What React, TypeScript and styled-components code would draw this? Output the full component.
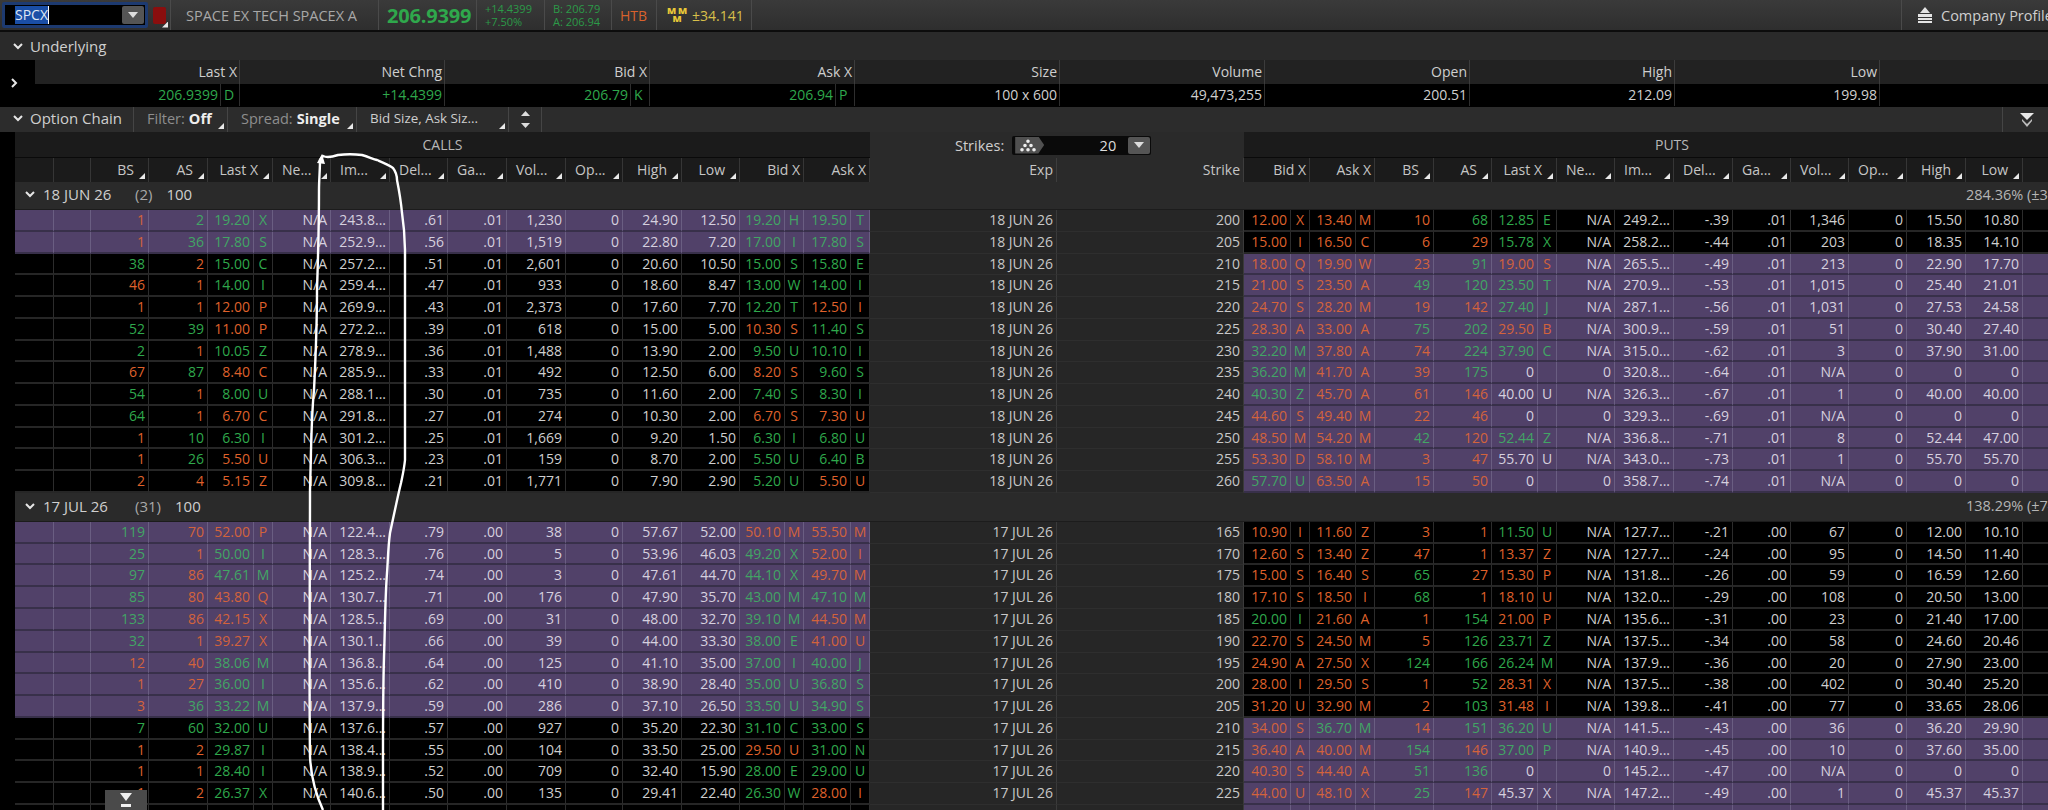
import React from 'react'
import styled, { createGlobalStyle } from 'styled-components'

const GREEN = '#2fa84c'
const ORANGE = '#df612b'
const GREEN_ITM = '#42a565'
const ORANGE_ITM = '#d3633c'
const PURPLE = '#514169'

const GlobalStyle = createGlobalStyle`
  html, body {
    margin: 0;
    width: 2048px;
    height: 810px;
    overflow: hidden;
    background: #000;
  }
  body {
    font-family: "Open Sans", "Liberation Sans", sans-serif;
    font-size: 14px;
    color: #cfcfcf;
  }
`

const Page = styled.div`
  width: 2100px;
  display: flex;
  flex-direction: column;
`

const TopBar = styled.div`
  display: flex;
  height: 30px;
  background: linear-gradient(#3a3a3a, #2e2e2e);
  border-bottom: 2px solid #0c0c0c;
`
const Seg = styled.div<{ $w: number }>`
  flex: 0 0 ${(p) => p.$w}px;
  display: flex;
  align-items: center;
  padding-left: 8px;
  box-sizing: border-box;
  border-right: 1px solid #4a4a4a;
  white-space: nowrap;
`
const Spacer = styled.div`
  flex: 1;
`
const SymbolSeg = styled.div`
  flex: 0 0 171px;
  display: flex;
  align-items: center;
  box-sizing: border-box;
  padding-left: 2px;
  gap: 5px;
  border-right: 1px solid #4a4a4a;
`
const SymbolBox = styled.div`
  width: 146px;
  height: 26px;
  box-sizing: border-box;
  background: #000;
  border: 3px solid #1d3a70;
  border-radius: 2px;
  display: flex;
  align-items: center;
  padding-left: 10px;
`
const Selected = styled.span`
  background: #1a4ea6;
  color: #dfe8f5;
  line-height: 18px;
  border-right: 1px solid #fff;
`
const DropBtn = styled.span`
  margin-left: auto;
  margin-right: 1px;
  width: 22px;
  height: 18px;
  background: #555;
  border-radius: 2px;
  display: flex;
  align-items: center;
  justify-content: center;
  &::after {
    content: '';
    border-left: 5px solid transparent;
    border-right: 5px solid transparent;
    border-top: 6px solid #ddd;
  }
`
const RedBox = styled.div`
  position: relative;
  width: 13px;
  height: 17px;
  background: #8a0e0e;
  border-radius: 2px;
`
const Corner = styled.span`
  position: absolute;
  right: 3px;
  bottom: 3px;
  width: 6px;
  height: 6px;
  background: #e8e8e8;
  clip-path: polygon(100% 0, 100% 100%, 0 100%);
`
const RedCorner = styled(Corner)`
  right: -2px;
  bottom: -4px;
`
const Name = styled.span`
  font-size: 14.5px;
  color: #a8a8a8;
  margin-left: 7px;
`
const Price = styled.span`
  font-size: 20px;
  font-weight: 700;
  color: ${GREEN};
  letter-spacing: -0.2px;
`
const Stack = styled.div<{ $color: string }>`
  display: flex;
  flex-direction: column;
  font-size: 11px;
  line-height: 13px;
  color: ${(p) => p.$color};
`
const Htb = styled.span`
  color: #d9622c;
`
const MmIcon = styled.span`
  display: inline-grid;
  grid-template-columns: 11px 11px;
  justify-items: center;
  margin: 0 4px 0 1px;
  font-size: 9.5px;
  font-weight: 800;
  line-height: 8px;
  color: #e8c838;
`
const MmBottom = styled.span`
  grid-column: span 2;
`
const Mm = styled.span`
  color: #d8c04a;
`
const ProfileSeg = styled.div`
  flex: 0 0 199px;
  display: flex;
  align-items: center;
  padding-left: 15px;
  gap: 8px;
  box-sizing: border-box;
  border-left: 1px solid #4a4a4a;
  font-size: 14.5px;
  color: #cfcfcf;
`

const Section = styled.div`
  height: 28px;
  display: flex;
  align-items: center;
  background: #2a2a2a;
  padding-left: 13px;
  gap: 7px;
  font-size: 15px;
`

const QuoteWrap = styled.div`
  display: flex;
  height: 46px;
  background: #000;
`
const QuoteGutter = styled.div`
  flex: 0 0 35px;
  display: flex;
  align-items: center;
  padding-left: 9px;
  box-sizing: border-box;
`
const QuoteGrid = styled.div`
  display: grid;
  grid-template-columns: repeat(9, 205px) 1fr;
  grid-template-rows: 24px 22px;
  flex: 1;
`
const QuoteHead = styled.div`
  background: #222;
  border-right: 1px solid #3c3c3c;
  text-align: right;
  padding-right: 2px;
  line-height: 24px;
`
const QuoteValue = styled.div<{ $green?: boolean }>`
  border-right: 1px solid #2e2e2e;
  display: flex;
  justify-content: flex-end;
  line-height: 22px;
  padding-right: 2px;
  color: ${(p) => (p.$green ? GREEN : '#cfcfcf')};
`
const QuoteExch = styled.span`
  flex: 0 0 19px;
  box-sizing: border-box;
  margin-left: 2px;
  margin-right: -2px;
  padding-left: 3px;
  border-left: 1px solid #2e2e2e;
`

const ChainBar = styled.div`
  height: 25px;
  display: flex;
  background: #2c2c2c;
  margin-top: 1px;
  font-size: 14.5px;
`
const BarSeg = styled.div<{ $w: number }>`
  position: relative;
  flex: 0 0 ${(p) => p.$w}px;
  display: flex;
  align-items: center;
  box-sizing: border-box;
  padding: 0 0 3px 13px;
  gap: 4px;
  border-right: 1px solid #454545;
  white-space: nowrap;
`
const TitleSeg = styled(BarSeg)`
  gap: 7px;
  font-size: 15px;
`
const Dim = styled.span`
  color: #8e8e8e;
`
const Strong = styled.b`
  color: #eee;
  font-weight: 700;
`
const Columns = styled.span`
  font-size: 13.4px;
`
const SpinSeg = styled.div`
  flex: 0 0 32px;
  display: flex;
  flex-direction: column;
  align-items: center;
  justify-content: space-around;
  border-right: 1px solid #454545;
`
const CollapseSeg = styled.div`
  margin-left: auto;
  flex: 0 0 98px;
  border-left: 1px solid #454545;
  display: flex;
  align-items: center;
  padding-left: 17px;
  box-sizing: border-box;
`

const Chain = styled.div`
  padding-left: 15px;
  background: #000;
`
const COLS =
  '39px 37px 58px 59px 46px 19px 58px 59px 58px 59px 59px 57px 59px 58px 45px 19px 47px 19px ' +
  '187px 187px ' +
  '47px 19px 46px 19px 59px 58px 46px 19px 58px 59px 59px 58px 58px 58px 59px 57px 77px'

const TitleRow = styled.div`
  display: grid;
  grid-template-columns: 855px 374px 856px;
  height: 26px;
`
const SideTitle = styled.div`
  background: #1b1b1b;
  text-align: center;
  line-height: 25px;
  color: #b8b8b8;
  border-bottom: 1px solid #0a0a0a;
`
const MidTitle = styled.div`
  background: #2a2a2a;
  display: flex;
  align-items: center;
  padding-left: 85px;
  gap: 8px;
  font-size: 14.5px;
`
const StrikeBox = styled.div`
  width: 139px;
  height: 19px;
  background: #0a0a0a;
  border-radius: 2px;
  display: flex;
  align-items: center;
`
const StrikeIcon = styled.span`
  width: 29px;
  height: 17px;
  margin-left: 3px;
  background: #505050;
  clip-path: polygon(0 0, 80% 0, 100% 50%, 80% 100%, 0 100%);
  display: flex;
  align-items: center;
  padding-left: 5px;
  box-sizing: border-box;
`
const StrikeValue = styled.span`
  margin-left: auto;
  margin-right: 12px;
  color: #ddd;
`
const StrikeDrop = styled(DropBtn)`
  margin-left: 0;
  width: 22px;
  height: 17px;
`

const HeadRow = styled.div`
  display: grid;
  grid-template-columns: ${COLS};
  height: 23px;
`
const Head = styled.div<{ $span?: number; $trunc?: boolean; $sort?: boolean; $mid?: boolean }>`
  position: relative;
  grid-column: span ${(p) => p.$span || 1};
  box-sizing: border-box;
  background: ${(p) => (p.$mid ? '#2a2a2a' : '#1b1b1b')};
  border-right: 1px solid ${(p) => (p.$mid ? '#3d3d3d' : '#363636')};
  line-height: 24px;
  font-size: 14px;
  color: #c6c6c6;
  white-space: nowrap;
  text-align: ${(p) => (p.$trunc ? 'left' : 'right')};
  padding: ${(p) => (p.$trunc ? '0 0 0 9px' : p.$sort ? '0 14px 0 0' : '0 3px 0 0')};
`

const GroupRow = styled.div`
  height: 29px;
  display: flex;
  align-items: center;
  background: #2a2a2a;
  padding: 0 0 2px 10px;
  box-sizing: border-box;
  border-bottom: 1px solid #1c1c1c;
  font-size: 15px;
`
const GroupDate = styled.span`
  flex: 0 0 92px;
  margin-left: 8px;
`
const GroupCount = styled.span`
  margin-right: 14px;
  color: #a8a8a8;
`
const GroupIv = styled.span`
  position: absolute;
  left: 1966px;
  white-space: nowrap;
  color: #b5b5b5;
  font-size: 14.5px;
`

const Row = styled.div`
  display: grid;
  grid-template-columns: ${COLS};
  height: 21.78px;
`
const toneColor = (tone: string | undefined, itm?: boolean) => {
  if (tone === 'g') return itm ? GREEN_ITM : GREEN
  if (tone === 'o') return itm ? ORANGE_ITM : ORANGE
  return itm ? '#d6d0df' : '#cfcfcf'
}
const Cell = styled.div<{ $itm?: boolean; $tone?: string; $center?: boolean }>`
  box-sizing: border-box;
  background: ${(p) => (p.$itm ? PURPLE : '#000')};
  border-right: 1px solid ${(p) => (p.$itm ? '#6a5e82' : '#2c2c2c')};
  border-bottom: 2px solid ${(p) => (p.$itm ? '#38304a' : '#262626')};
  color: ${(p) => toneColor(p.$tone, p.$itm)};
  text-align: ${(p) => (p.$center ? 'center' : 'right')};
  padding-right: ${(p) => (p.$center ? 0 : 3)}px;
  line-height: 20px;
  white-space: nowrap;
  overflow: hidden;
`
const MidCell = styled.div`
  box-sizing: border-box;
  background: #262626;
  border-right: 1px solid #3a3a3a;
  border-bottom: 1px solid #2e2e2e;
  text-align: right;
  padding-right: 3px;
  line-height: 20px;
  color: #c8c8c8;
`

const ScrollBtn = styled.div`
  position: absolute;
  left: 105px;
  top: 790px;
  width: 42px;
  height: 20px;
  background: #4a4a4a;
  display: flex;
  align-items: center;
  justify-content: center;
`
const Scribble = styled.svg`
  position: absolute;
  left: 0;
  top: 0;
  pointer-events: none;
`

const Chevron = ({ right }: { right?: boolean }) => (
  <svg width="10" height="10" viewBox="0 0 10 10" style={right ? { transform: 'rotate(-90deg)' } : undefined}>
    <path d="M1 3l4 4 4-4" fill="none" stroke="#e6e6e6" strokeWidth="2" />
  </svg>
)
const Tri = ({ down }: { down?: boolean }) => (
  <svg width="9" height="5" viewBox="0 0 9 5">
    <path d={down ? 'M0 0h9L4.5 5z' : 'M0 5h9L4.5 0z'} fill="#dcdcdc" />
  </svg>
)

type Side = { itm: boolean; text: string }
type ChainRow = { calls: Side; puts: Side; exp: string; strike: string }

const SideCells = ({ side, keyPrefix }: { side: Side; keyPrefix: string }) => {
  const tokens = side.text.split(' ')
  let last = ''
  return (
    <>
      {tokens.map((raw, i) => {
        let tone = ''
        let value = raw
        if (raw[0] === '^') tone = 'g'
        if (raw[0] === '~') tone = 'o'
        if (tone) value = raw.slice(1)
        const isExch = /^[A-Z_]$/.test(value)
        if (isExch) tone = last
        last = tone
        return (
          <Cell key={keyPrefix + i} $itm={side.itm} $tone={tone} $center={isExch}>
            {value === '_' ? '' : value}
          </Cell>
        )
      })}
    </>
  )
}

const EMPTY_CALLS = '_ _ _ _ _ _ _ _ _ _ _ _ _ _ _ _ _ _'

const parse = (lines: string[], exp: string): ChainRow[] =>
  lines.map((line) => {
    const [c, strike, p] = line.split('|')
    const callsItm = c[0] === '*'
    const putsItm = p[0] === '*'
    return {
      calls: { itm: callsItm, text: callsItm ? c.slice(1) : c },
      puts: { itm: putsItm, text: (putsItm ? p.slice(1) : p) + ' _' },
      exp,
      strike,
    }
  })

const JUN = parse(
  [
    '*_ _ ~1 ^2 ^19.20 X N/A 243.8... .61 .01 1,230 0 24.90 12.50 ^19.20 H ^19.50 T|200|~12.00 X ~13.40 M ~10 ^68 ^12.85 E N/A 249.2... -.39 .01 1,346 0 15.50 10.80',
    '*_ _ ~1 ^36 ^17.80 S N/A 252.9... .56 .01 1,519 0 22.80 7.20 ^17.00 I ^17.80 S|205|~15.00 I ~16.50 C ~6 ~29 ^15.78 X N/A 258.2... -.44 .01 203 0 18.35 14.10',
    '_ _ ^38 ~2 ^15.00 C N/A 257.2... .51 .01 2,601 0 20.60 10.50 ^15.00 S ^15.80 E|210|*~18.00 Q ~19.90 W ~23 ^91 ~19.00 S N/A 265.5... -.49 .01 213 0 22.90 17.70',
    '_ _ ~46 ~1 ^14.00 I N/A 259.4... .47 .01 933 0 18.60 8.47 ^13.00 W ^14.00 I|215|*~21.00 S ~23.50 A ^49 ^120 ^23.50 T N/A 270.9... -.53 .01 1,015 0 25.40 21.01',
    '_ _ ~1 ~1 ~12.00 P N/A 269.9... .43 .01 2,373 0 17.60 7.70 ^12.20 T ~12.50 I|220|*~24.70 S ~28.20 M ~19 ~142 ^27.40 J N/A 287.1... -.56 .01 1,031 0 27.53 24.58',
    '_ _ ^52 ^39 ~11.00 P N/A 272.2... .39 .01 618 0 15.00 5.00 ~10.30 S ^11.40 S|225|*~28.30 A ~33.00 A ^75 ^202 ~29.50 B N/A 300.9... -.59 .01 51 0 30.40 27.40',
    '_ _ ^2 ~1 ^10.05 Z N/A 278.9... .36 .01 1,488 0 13.90 2.00 ^9.50 U ^10.10 I|230|*^32.20 M ~37.80 A ~74 ^224 ^37.90 C N/A 315.0... -.62 .01 3 0 37.90 31.00',
    '_ _ ~67 ^87 ~8.40 C N/A 285.9... .33 .01 492 0 12.50 6.00 ~8.20 S ^9.60 S|235|*^36.20 M ~41.70 A ~39 ^175 0 _ 0 320.8... -.64 .01 N/A 0 0 0',
    '_ _ ^54 ~1 ^8.00 U N/A 288.1... .30 .01 735 0 11.60 2.00 ^7.40 S ^8.30 I|240|*^40.30 Z ~45.70 A ~61 ~146 40.00 U N/A 326.3... -.67 .01 1 0 40.00 40.00',
    '_ _ ^64 ~1 ~6.70 C N/A 291.8... .27 .01 274 0 10.30 2.00 ~6.70 S ~7.30 U|245|*~44.60 S ~49.40 M ~22 ~46 0 _ 0 329.3... -.69 .01 N/A 0 0 0',
    '_ _ ~1 ^10 ^6.30 I N/A 301.2... .25 .01 1,669 0 9.20 1.50 ^6.30 I ^6.80 U|250|*~48.50 M ~54.20 M ^42 ~120 ^52.44 Z N/A 336.8... -.71 .01 8 0 52.44 47.00',
    '_ _ ~1 ^26 ~5.50 U N/A 306.3... .23 .01 159 0 8.70 2.00 ^5.50 U ^6.40 B|255|*~53.30 D ~58.10 M ~3 ~47 55.70 U N/A 343.0... -.73 .01 1 0 55.70 55.70',
    '_ _ ~2 ~4 ~5.15 Z N/A 309.8... .21 .01 1,771 0 7.90 2.90 ^5.20 U ~5.50 U|260|*^57.70 U ~63.50 A ~15 ~50 0 _ 0 358.7... -.74 .01 N/A 0 0 0',
  ],
  '18 JUN 26',
)

const JUL = parse(
  [
    '*_ _ ^119 ~70 ~52.00 P N/A 122.4... .79 .00 38 0 57.67 52.00 ~50.10 M ~55.50 M|165|~10.90 I ~11.60 Z ~3 ~1 ^11.50 U N/A 127.7... -.21 .00 67 0 12.00 10.10',
    '*_ _ ^25 ~1 ^50.00 I N/A 128.3... .76 .00 5 0 53.96 46.03 ^49.20 X ~52.00 I|170|~12.60 S ~13.40 Z ~47 ~1 ~13.37 Z N/A 127.7... -.24 .00 95 0 14.50 11.40',
    '*_ _ ^97 ~86 ^47.61 M N/A 125.2... .74 .00 3 0 47.61 44.70 ^44.10 X ~49.70 M|175|~15.00 S ~16.40 S ^65 ~27 ~15.30 P N/A 131.8... -.26 .00 59 0 16.59 12.60',
    '*_ _ ^85 ~80 ~43.80 Q N/A 130.7... .71 .00 176 0 47.90 35.70 ^43.00 M ^47.10 M|180|~17.10 S ~18.50 I ^68 ~1 ~18.10 U N/A 132.0... -.29 .00 108 0 20.50 13.00',
    '*_ _ ^133 ~86 ~42.15 X N/A 128.5... .69 .00 31 0 48.00 32.70 ^39.10 M ~44.50 M|185|^20.00 I ~21.60 A ~1 ^154 ~21.00 P N/A 135.6... -.31 .00 23 0 21.40 17.00',
    '*_ _ ^32 ~1 ~39.27 X N/A 130.1... .66 .00 39 0 44.00 33.30 ^38.00 E ~41.00 U|190|~22.70 S ~24.50 M ~5 ^126 ^23.71 Z N/A 137.5... -.34 .00 58 0 24.60 20.46',
    '*_ _ ~12 ~40 ^38.06 M N/A 136.8... .64 .00 125 0 41.10 35.00 ^37.00 I ^40.00 J|195|~24.90 A ~27.50 X ^124 ^166 ^26.24 M N/A 137.9... -.36 .00 20 0 27.90 23.00',
    '*_ _ ~1 ~27 ^36.00 I N/A 135.6... .62 .00 410 0 38.90 28.40 ^35.00 U ^36.80 S|200|~28.00 I ~29.50 S ~1 ^52 ~28.31 X N/A 137.5... -.38 .00 402 0 30.40 25.20',
    '*_ _ ~3 ^36 ^33.22 M N/A 137.9... .59 .00 286 0 37.10 26.50 ^33.50 U ^34.90 S|205|~31.20 U ~32.90 M ~2 ^103 ~31.48 I N/A 139.8... -.41 .00 77 0 33.65 28.06',
    '_ _ ^7 ^60 ^32.00 U N/A 137.6... .57 .00 927 0 35.20 22.30 ^31.10 C ^33.00 S|210|*~34.00 S ^36.70 M ~14 ^151 ^36.20 U N/A 141.5... -.43 .00 36 0 36.20 29.90',
    '_ _ ~1 ~2 ^29.87 I N/A 138.4... .55 .00 104 0 33.50 25.00 ~29.50 U ^31.00 N|215|*~36.40 A ~40.00 M ^154 ~146 ^37.00 P N/A 140.9... -.45 .00 10 0 37.60 35.00',
    '_ _ ~1 ~1 ^28.40 I N/A 138.9... .52 .00 709 0 32.40 15.90 ^28.00 E ^29.00 U|220|*~40.30 S ~44.40 A ^51 ^136 0 _ 0 145.2... -.47 .00 N/A 0 0 0',
    '_ _ ~1 ~2 ^26.37 X N/A 140.6... .50 .00 135 0 29.41 22.40 ^26.30 W ~28.00 I|225|*~44.00 U ~48.10 X ^25 ~147 45.37 X N/A 147.2... -.49 .00 1 0 45.37 45.37',
    `${EMPTY_CALLS}| |*_ _ _ _ _ _ _ _ _ _ _ _ _ _ _ _`,
  ],
  '17 JUL 26',
)

type HeadDef = [string, 'sort' | 'trunc' | 'plain', number]

const CALL_HEADS: HeadDef[] = [
  ['', 'plain', 1],
  ['', 'plain', 1],
  ['BS', 'sort', 1],
  ['AS', 'sort', 1],
  ['Last X', 'sort', 2],
  ['Ne...', 'trunc', 1],
  ['Im...', 'trunc', 1],
  ['Del...', 'trunc', 1],
  ['Ga...', 'trunc', 1],
  ['Vol...', 'trunc', 1],
  ['Op...', 'trunc', 1],
  ['High', 'sort', 1],
  ['Low', 'sort', 1],
  ['Bid X', 'plain', 2],
  ['Ask X', 'plain', 2],
]
const PUT_HEADS: HeadDef[] = [
  ['Bid X', 'plain', 2],
  ['Ask X', 'plain', 2],
  ['BS', 'sort', 1],
  ['AS', 'sort', 1],
  ['Last X', 'sort', 2],
  ['Ne...', 'trunc', 1],
  ['Im...', 'trunc', 1],
  ['Del...', 'trunc', 1],
  ['Ga...', 'trunc', 1],
  ['Vol...', 'trunc', 1],
  ['Op...', 'trunc', 1],
  ['High', 'sort', 1],
  ['Low', 'sort', 1],
  ['', 'plain', 1],
]

const renderHeads = (heads: HeadDef[], prefix: string) =>
  heads.map(([label, kind, span], i) => (
    <Head key={prefix + i} $span={span} $trunc={kind === 'trunc'} $sort={kind === 'sort'}>
      {label}
      {kind === 'sort' || kind === 'trunc' ? <Corner /> : null}
    </Head>
  ))

const QUOTES: [string, string, string, boolean][] = [
  ['Last X', '206.9399', 'D', true],
  ['Net Chng', '+14.4399', '', true],
  ['Bid X', '206.79', 'K', true],
  ['Ask X', '206.94', 'P', true],
  ['Size', '100 x 600', '', false],
  ['Volume', '49,473,255', '', false],
  ['Open', '200.51', '', false],
  ['High', '212.09', '', false],
  ['Low', '199.98', '', false],
  ['', '', '', false],
]

const Group = ({ date, count, iv, rows }: { date: string; count: string; iv: string; rows: ChainRow[] }) => (
  <>
    <GroupRow>
      <Chevron />
      <GroupDate>{date}</GroupDate>
      <GroupCount>({count})</GroupCount>
      <span>100</span>
      <GroupIv>{iv}</GroupIv>
    </GroupRow>
    {rows.map((r, i) => (
      <Row key={i}>
        <SideCells side={r.calls} keyPrefix="c" />
        <MidCell>{r.strike.trim() ? r.exp : ''}</MidCell>
        <MidCell>{r.strike}</MidCell>
        <SideCells side={r.puts} keyPrefix="p" />
      </Row>
    ))}
  </>
)

const App = () => {
  return (
    <>
      <GlobalStyle />
      <Page>
        <TopBar>
          <SymbolSeg>
            <SymbolBox>
              <Selected>SPCX</Selected>
              <DropBtn />
            </SymbolBox>
            <RedBox>
              <RedCorner />
            </RedBox>
          </SymbolSeg>
          <Seg $w={208}>
            <Name>SPACE EX TECH SPACEX A</Name>
          </Seg>
          <Seg $w={98}>
            <Price>206.9399</Price>
          </Seg>
          <Seg $w={68}>
            <Stack $color="#2c9a48">
              <span>+14.4399</span>
              <span>+7.50%</span>
            </Stack>
          </Seg>
          <Seg $w={67}>
            <Stack $color="#2c9a48">
              <span>B: 206.79</span>
              <span>A: 206.94</span>
            </Stack>
          </Seg>
          <Seg $w={45}>
            <Htb>HTB</Htb>
          </Seg>
          <Seg $w={95}>
            <MmIcon>
              <span>M</span>
              <span>M</span>
              <MmBottom>M</MmBottom>
            </MmIcon>
            <Mm>±34.141</Mm>
          </Seg>
          <Spacer />
          <ProfileSeg>
            <svg width="16" height="16" viewBox="0 0 16 16">
              <path d="M8 0l5 6H3z" fill="#e4e4e4" />
              <path d="M1 7h14v3H1zM1 11h14v2H1zM1 14h14v2H1z" fill="#e4e4e4" />
            </svg>
            Company Profile
          </ProfileSeg>
        </TopBar>

        <Section>
          <Chevron />
          Underlying
        </Section>

        <QuoteWrap>
          <QuoteGutter>
            <Chevron right />
          </QuoteGutter>
          <QuoteGrid>
            {QUOTES.map((q, i) => (
              <QuoteHead key={i}>{q[0]}</QuoteHead>
            ))}
            {QUOTES.map((q, i) => (
              <QuoteValue key={i} $green={q[3]}>
                {q[1]}
                {q[2] ? <QuoteExch>{q[2]}</QuoteExch> : null}
              </QuoteValue>
            ))}
          </QuoteGrid>
        </QuoteWrap>

        <ChainBar>
          <TitleSeg $w={134}>
            <Chevron />
            Option Chain
          </TitleSeg>
          <BarSeg $w={94}>
            <Dim>Filter:</Dim>
            <Strong>Off</Strong>
            <Corner />
          </BarSeg>
          <BarSeg $w={129}>
            <Dim>Spread:</Dim>
            <Strong>Single</Strong>
            <Corner />
          </BarSeg>
          <BarSeg $w={152}>
            <Columns>Bid Size, Ask Siz...</Columns>
            <Corner />
          </BarSeg>
          <SpinSeg>
            <Tri />
            <Tri down />
          </SpinSeg>
          <CollapseSeg>
            <svg width="14" height="14" viewBox="0 0 14 14">
              <path d="M0 0h14L7 7z" fill="#e8e8e8" />
              <path d="M2 6l5 5 5-5v2l-5 6-5-6z" fill="#bdbdbd" />
            </svg>
          </CollapseSeg>
        </ChainBar>

        <Chain>
          <TitleRow>
            <SideTitle>CALLS</SideTitle>
            <MidTitle>
              Strikes:
              <StrikeBox>
                <StrikeIcon>
                  <svg width="16" height="13" viewBox="0 0 16 12">
                    <path
                      d="M8 0a1.8 1.8 0 1 1 0 3.6A1.8 1.8 0 0 1 8 0zM5 4.2a1.8 1.8 0 1 1 0 3.6 1.8 1.8 0 0 1 0-3.6zM11 4.2a1.8 1.8 0 1 1 0 3.6 1.8 1.8 0 0 1 0-3.6zM2 8.4a1.8 1.8 0 1 1 0 3.6 1.8 1.8 0 0 1 0-3.6zM8 8.4a1.8 1.8 0 1 1 0 3.6 1.8 1.8 0 0 1 0-3.6zM14 8.4a1.8 1.8 0 1 1 0 3.6 1.8 1.8 0 0 1 0-3.6z"
                      fill="#eee"
                    />
                  </svg>
                </StrikeIcon>
                <StrikeValue>20</StrikeValue>
                <StrikeDrop />
              </StrikeBox>
            </MidTitle>
            <SideTitle>PUTS</SideTitle>
          </TitleRow>
          <HeadRow>
            {renderHeads(CALL_HEADS, 'c')}
            <Head $mid>Exp</Head>
            <Head $mid>Strike</Head>
            {renderHeads(PUT_HEADS, 'p')}
          </HeadRow>
          <Group date="18 JUN 26" count="2" iv="284.36% (±34.141)" rows={JUN} />
          <Group date="17 JUL 26" count="31" iv="138.29% (±74.21)" rows={JUL} />
        </Chain>
      </Page>

      <ScrollBtn>
        <svg width="14" height="16" viewBox="0 0 14 16">
          <path d="M1 1h12L7 9z" fill="#f0f0f0" />
          <path d="M2 12h10v3H2z" fill="#f0f0f0" />
        </svg>
      </ScrollBtn>

      <Scribble width="2048" height="810" viewBox="0 0 2048 810">
        <path
          d="M323 810C316 795 311 775 310 757C309 680 310 560 310 490C311 460 311 420 314 390C316 350 317 320 317 290C318 260 319 220 319 190C319 180 320 170 320 160L323 156C327 158 332 157 338 155C346 154 354 154 362 155C369 157 373 159 377 160C384 163 389 165 393 168C396 172 397 176 397 180C399 190 401 202 402 213L404 230L405 250C405 290 405 300 405 323C405 380 405 420 405 460C404 470 402 478 401 483C398 495 395 510 390 533C388 548 388 560 387 573C385 600 385 630 384 657C383 690 383 730 383 757V810"
          fill="none"
          stroke="#fff"
          strokeWidth="2.4"
        />
        <path d="M322 154l-5 9 8 1z" fill="#fff" />
      </Scribble>
    </>
  )
}

export default App
